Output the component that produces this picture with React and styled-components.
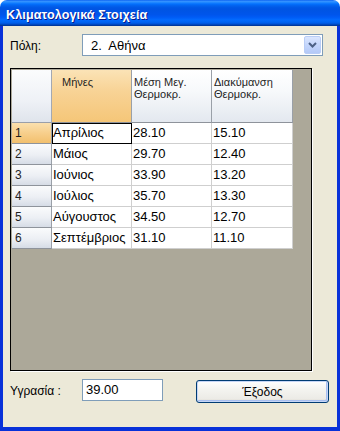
import React from "react";
import styled, { createGlobalStyle } from "styled-components";

const Global = createGlobalStyle`
  html, body { margin: 0; padding: 0; background: #fff; }
  body { font-family: "Liberation Sans", Arial, sans-serif; }
  * { box-sizing: border-box; }
`;

const Window = styled.div`
  width: 340px;
  height: 431px;
  display: flex;
  flex-direction: column;
  border-radius: 7px 7px 0 0;
  overflow: hidden;
`;

const TitleBar = styled.div`
  height: 26px;
  flex: none;
  display: flex;
  align-items: center;
  padding: 4px 0 0 6px;
  background: linear-gradient(180deg, #0058ee 0%, #3a93ff 4%, #288eff 8%, #127dff 12%, #036ffc 16%, #0262ee 22%, #0057e5 30%, #0054e3 36%, #0055eb 56%, #005bf5 66%, #026afe 76%, #0062ef 86%, #0052d6 92%, #0040ab 96%, #003092 100%);
  color: #fff;
  font: bold 12.6px "Liberation Sans", Arial, sans-serif;
  text-shadow: 1px 1px 0 #0a1a8a;
  letter-spacing: 0.1px;
`;

const Body = styled.div`
  flex: 1;
  display: flex;
  flex-direction: column;
  background: #ece9d8;
  border-left: 3px solid #0831d9;
  border-right: 3px solid #0831d9;
  border-bottom: 4px solid #0831d9;
  padding: 8px 0 0 7px;
`;

const FieldRow = styled.div`
  display: flex;
  align-items: ${(p) => (p.$top ? "flex-start" : "center")};
  margin-top: ${(p) => p.$mt || 0}px;
`;

const Label = styled.div`
  width: 72px;
  font-size: 12px;
  color: #000;
  padding-top: ${(p) => p.$pt || 0}px;
`;

const Select = styled.div`
  width: 241px;
  height: 22px;
  border: 1px solid #7f9db9;
  background: #fff;
  display: flex;
  align-items: center;
  justify-content: space-between;
  padding: 1px 1px 1px 8px;
  font-size: 13px;
  white-space: pre;
`;

const DropBtn = styled.div`
  width: 17px;
  height: 18px;
  border: 1px solid #b9cdf6;
  border-radius: 2px;
  background: linear-gradient(180deg, #dbe6fe 0%, #c4d6fc 50%, #b4c9f7 100%);
  display: flex;
  align-items: center;
  justify-content: center;
`;

const Frame = styled.div`
  width: 302px;
  height: 303px;
  margin-top: 12px;
  border: 1px solid #000;
  box-shadow: 1px 1px 0 #fff;
  background: #aca899;
  padding: 1px 0 0 1px;
`;

const Grid = styled.div`
  display: grid;
  grid-template-columns: 40px 80px 80px 81px;
  grid-template-rows: 53px repeat(6, 21px);
  width: 281px;
`;

const Corner = styled.div`
  background: linear-gradient(180deg, #fbfcfd 0%, #eef1f6 60%, #dfe4ec 100%);
  border-right: 1px solid #a3a8b3;
  border-bottom: 1px solid #9a9fa9;
`;

const ColHead = styled.div`
  background: ${(p) =>
    p.$sel
      ? "linear-gradient(180deg, #fbe3b6 0%, #f8d396 40%, #f5c678 100%)"
      : "linear-gradient(180deg, #ffffff 0%, #f7f9fb 40%, #e3e8ef 100%)"};
  border-right: 1px solid #9aa0a8;
  border-bottom: 1px solid #8e939b;
  padding: 6px 0 0 ${(p) => (p.$sel ? 10 : 2)}px;
  font-size: 11px;
  line-height: 12px;
  color: #1e1e1e;
`;

const RowHead = styled.div`
  background: ${(p) =>
    p.$sel
      ? "linear-gradient(180deg, #fbe0ae 0%, #f7cf8c 50%, #f2c06d 100%)"
      : "linear-gradient(180deg, #fafbfc 0%, #eceff4 55%, #d6dce6 100%)"};
  border-right: 1px solid #9aa0a8;
  border-bottom: 1px solid #8e939b;
  padding-left: 3px;
  font-size: 12px;
  line-height: 20px;
  color: #1e1e1e;
`;

const Cell = styled.div`
  background: #fff;
  border-right: 1px solid #cfcfcf;
  border-bottom: 1px solid #cfcfcf;
  font-size: 13px;
  line-height: 20px;
  padding-left: 1px;
  color: #000;
  white-space: nowrap;
  outline: ${(p) => (p.$focus ? "1px solid #000" : "none")};
  outline-offset: -1px;
`;

const TextBox = styled.div`
  width: 81px;
  height: 22px;
  border: 1px solid #7f9db9;
  background: #fff;
  font-size: 13px;
  line-height: 20px;
  padding-left: 3px;
`;

const Button = styled.div`
  width: 133px;
  height: 23px;
  margin: 1px 0 0 33px;
  border: 1px solid #003c74;
  border-radius: 3px;
  background: linear-gradient(180deg, #ffffff 0%, #f4f4f0 40%, #ecebe6 85%, #d8d5cb 100%);
  box-shadow: inset 0 0 0 1px #c6d6f6, inset -1px -1px 0 1px #a8bff0;
  display: flex;
  align-items: center;
  justify-content: center;
  font-size: 12px;
  color: #000;
`;

const rows = [
  ["Απρίλιος", "28.10", "15.10"],
  ["Μάιος", "29.70", "12.40"],
  ["Ιούνιος", "33.90", "13.20"],
  ["Ιούλιος", "35.70", "13.30"],
  ["Αύγουστος", "34.50", "12.70"],
  ["Σεπτέμβριος", "31.10", "11.10"],
];

export default function App() {
  return (
    <>
      <Global />
      <Window>
        <TitleBar>Κλιματολογικά Στοιχεία</TitleBar>
        <Body>
          <FieldRow>
            <Label $pt={1}>Πόλη:</Label>
            <Select>
              <span>2.  Αθήνα</span>
              <DropBtn>
                <svg width="9" height="6" viewBox="0 0 9 6">
                  <path d="M1 1 L4.5 4.5 L8 1" fill="none" stroke="#4d6185" strokeWidth="2" />
                </svg>
              </DropBtn>
            </Select>
          </FieldRow>
          <Frame>
            <Grid>
              <Corner />
              <ColHead $sel>Μήνες</ColHead>
              <ColHead>Μέση Μεγ.<br />Θερμοκρ.</ColHead>
              <ColHead>Διακύμανση<br />Θερμοκρ.</ColHead>
              {rows.map((r, i) => (
                <React.Fragment key={i}>
                  <RowHead $sel={i === 0}>{i + 1}</RowHead>
                  <Cell $focus={i === 0}>{r[0]}</Cell>
                  <Cell>{r[1]}</Cell>
                  <Cell>{r[2]}</Cell>
                </React.Fragment>
              ))}
            </Grid>
          </Frame>
          <FieldRow $top $mt={8}>
            <Label $pt={5}>Υγρασία :</Label>
            <TextBox>39.00</TextBox>
            <Button>Έξοδος</Button>
          </FieldRow>
        </Body>
      </Window>
    </>
  );
}
